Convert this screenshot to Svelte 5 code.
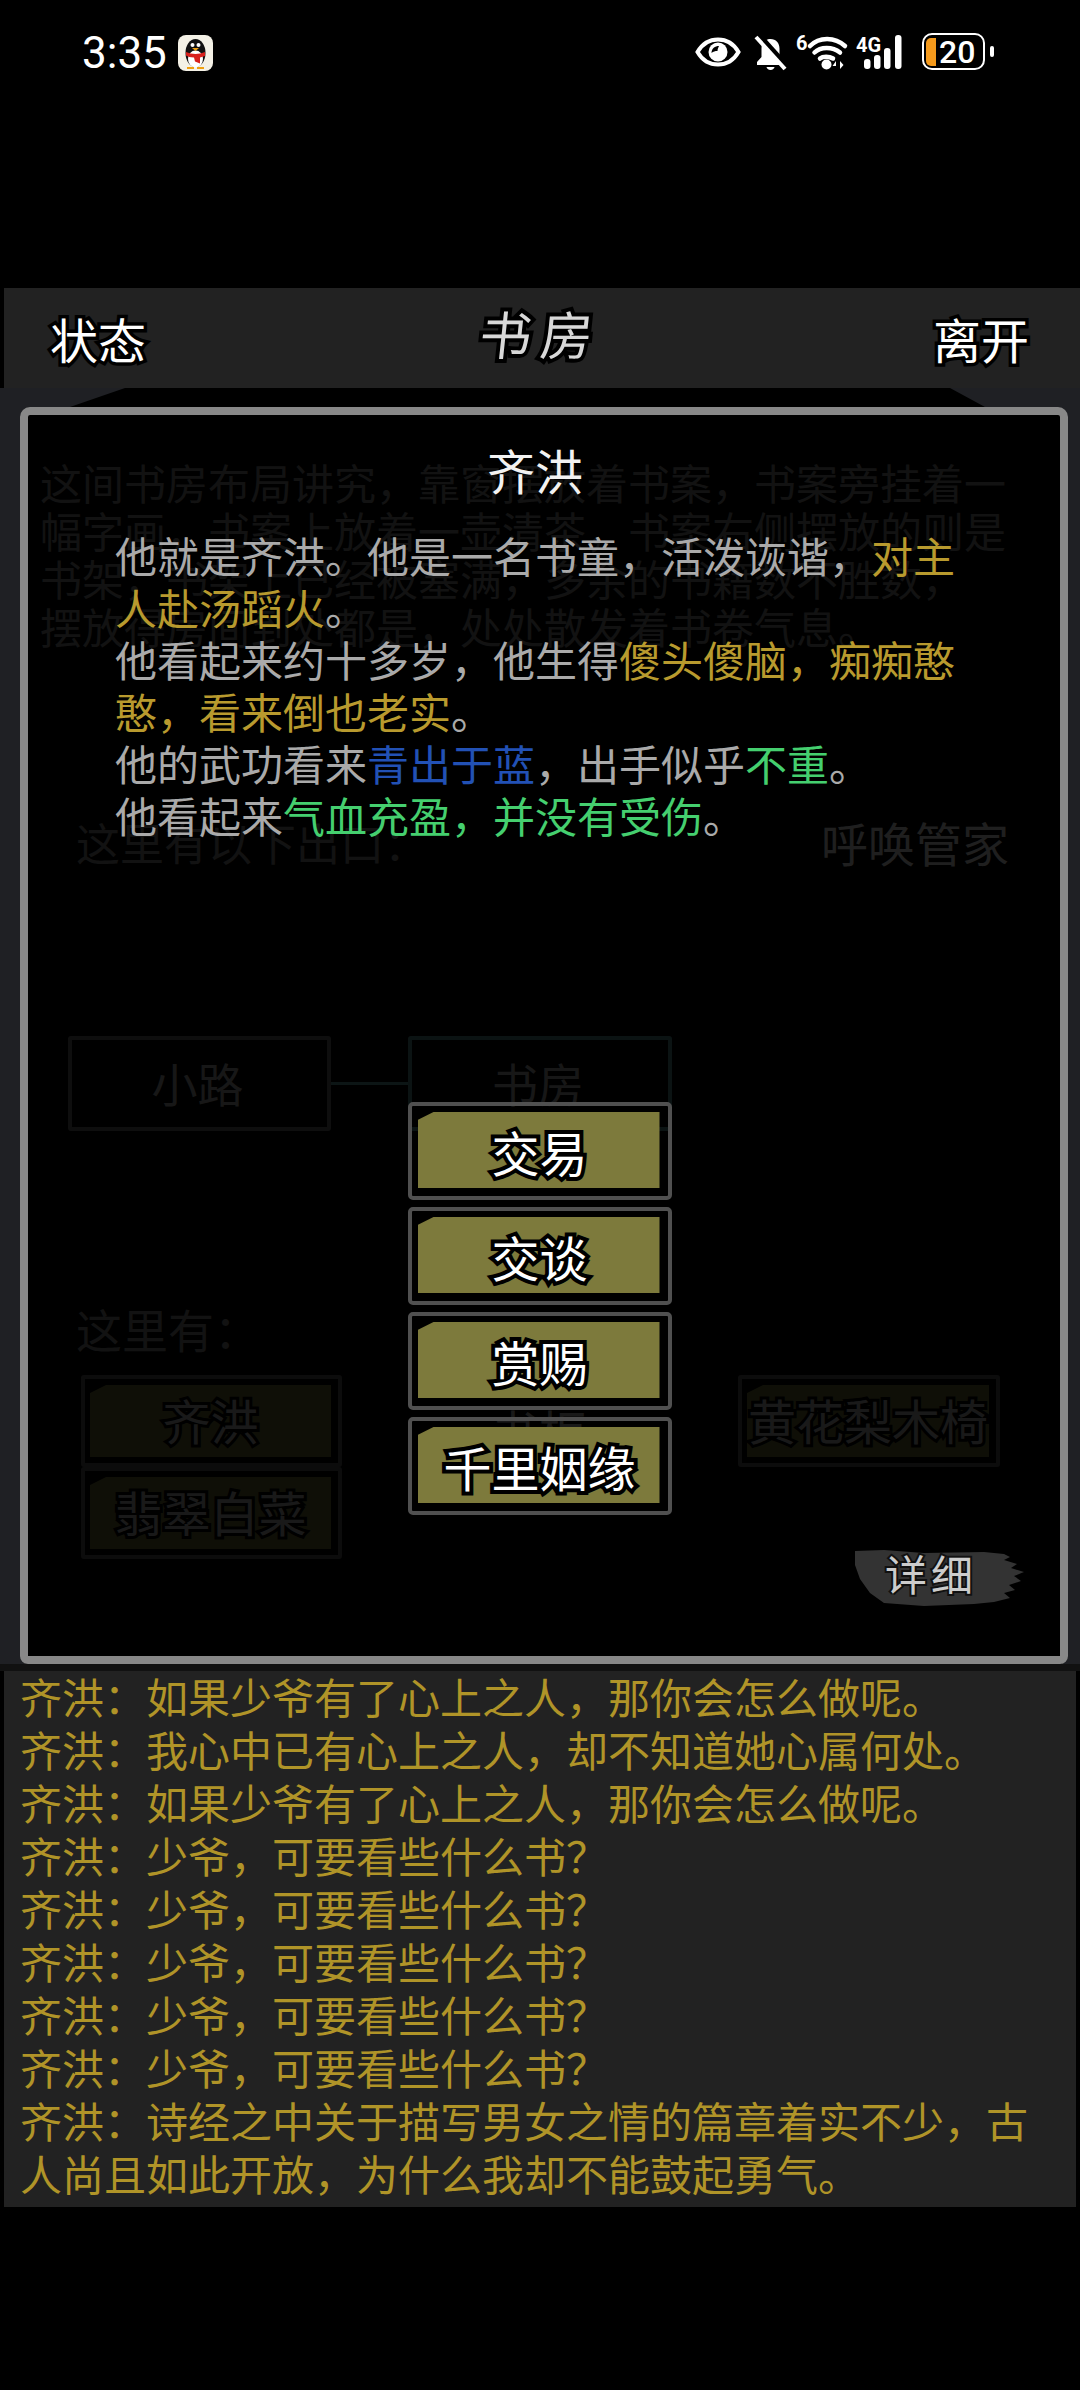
<script>
  const sceneLines = [
    '这间书房布局讲究，靠窗摆放着书案，书案旁挂着一',
    '幅字画，书案上放着一壶清茶，书案右侧摆放的则是',
    '书架，书架上已经被塞满，多余的书籍数不胜数，',
    '摆放得房间到处都是，处处散发着书卷气息。'
  ];
  const menu = ['交易', '交谈', '赏赐', '千里姻缘'];
  const log = [
    '如果少爷有了心上之人，那你会怎么做呢。',
    '我心中已有心上之人，却不知道她心属何处。',
    '如果少爷有了心上之人，那你会怎么做呢。',
    '少爷，可要看些什么书？',
    '少爷，可要看些什么书？',
    '少爷，可要看些什么书？',
    '少爷，可要看些什么书？',
    '少爷，可要看些什么书？',
    '诗经之中关于描写男女之情的篇章着实不少，古人尚且如此开放，为什么我却不能鼓起勇气。'
  ];
</script>

<div class="page">
  <header class="status">
    <span class="time">3:35</span>
    <svg class="qq" viewBox="0 0 35 36" aria-hidden="true">
      <rect width="35" height="36" rx="8" fill="#f4f1e6" />
      <ellipse cx="17.500" cy="18" rx="10" ry="14" fill="#111" />
      <ellipse cx="17.500" cy="24" rx="7.500" ry="8.500" fill="#fff" />
      <circle cx="14.500" cy="10" r="2" fill="#fff" />
      <circle cx="20.500" cy="10" r="2" fill="#fff" />
      <path d="M14 13h7l-3.500 3z" fill="#f0a010" />
      <path d="M8 17c6 2.500 13 2.500 19 0v4l-5 1.500v6l-5-2-1-4c-4 0-6-1-8-2z" fill="#d8201c" />
      <path d="M9 32h7v2H9zM19 32h7v2h-7z" fill="#f0a010" />
    </svg>
    <div class="icons">
      <svg class="eye" width="46" height="30" viewBox="0 0 46 30" aria-hidden="true">
        <path d="M2.500 15C8 5.500 15 2.500 23 2.500S38 5.500 43.500 15C38 24.500 31 27.500 23 27.500S8 24.500 2.500 15z" fill="none" stroke="#fff" stroke-width="4" />
        <circle cx="23" cy="15" r="9.500" fill="#fff" />
        <path d="M16.500 16c0-4.500 3.500-7 7.500-7-1 2-1.500 3.500-1.500 5-2.500 0-4 .5-6 2z" fill="#000" />
      </svg>
      <svg class="bell" width="33" height="34" viewBox="0 0 33 34" aria-hidden="true">
        <path d="M16.500 3c5.500 0 9 4 9 9.500v8.500l4.500 5v3H3v-3l4.500-5v-8.500c0-5.500 3.500-9.500 9-9.500z" fill="#fff" />
        <path d="M12.500 31h8c0 1.500-2 3-4 3s-4-1.500-4-3z" fill="#fff" />
        <path d="M6 0l26 29" stroke="#000" stroke-width="5" />
        <path d="M2 1l29 32" stroke="#fff" stroke-width="4" />
      </svg>
      <svg class="wifi" width="50" height="35" viewBox="0 0 50 35" aria-hidden="true">
        <text x="0" y="15" class="mini">6</text>
        <path d="M14 11C23 1.500 39 1.500 49 11M18.500 17.500c6-6 18-6 25.500 0M24 23.500c3-2.500 9-2.500 13 0" fill="none" stroke="#fff" stroke-width="4.500" stroke-linecap="round" />
        <circle cx="30.500" cy="29.500" r="5" fill="#fff" />
        <path d="M40 34v-8l-3.500 5H40zM44 26v8l3.500-4z" fill="#fff" />
      </svg>
      <svg class="signal" width="51" height="34" viewBox="0 0 51 34" aria-hidden="true">
        <text x="-1" y="17" class="mini">4G</text>
        <g fill="#fff">
          <rect x="7" y="24" width="6.500" height="10" rx="3" />
          <rect x="17" y="20" width="6.500" height="14" rx="3" />
          <rect x="27" y="13" width="6.500" height="21" rx="3" />
          <rect x="38" y="0" width="6.500" height="34" rx="3" />
        </g>
      </svg>
      <div class="battery">
        <div class="cell"><span class="charge"></span><span class="level">20</span></div>
        <span class="tip"></span>
      </div>
    </div>
  </header>

  <div class="topbar">
    <span class="outlined side">状态</span>
    <span class="outlined room">书房</span>
    <span class="outlined side">离开</span>
  </div>

  <main class="stage">
    <svg class="ink" viewBox="0 0 1080 1283" aria-hidden="true">
      <path d="M125 0L950 0L985 19L1062 27V1276H25V27L70 19z" fill="#000" />
      <rect y="1276" width="1080" height="7" fill="#111" />
    </svg>

    <section class="scene">
      <div class="desc">
        {#each sceneLines as line}
          <p>{line}</p>
        {/each}
      </div>
      <div class="exits">
        <span>这里有以下出口：</span>
        <span class="call">呼唤管家</span>
      </div>
      <div class="map">
        <div class="node">小路</div>
        <i class="link"></i>
        <div class="node current">书房</div>
      </div>
      <div class="here">这里有：</div>
      <div class="things">
        <div class="col">
          <div class="thing"><span>齐洪</span></div>
          <div class="thing"><span>翡翠白菜</span></div>
        </div>
        <div class="col">
          <div class="thing plain"><span>书柜</span></div>
        </div>
        <div class="col">
          <div class="thing"><span>黄花梨木椅</span></div>
        </div>
      </div>
    </section>

    <div class="modal">
      <h2>齐洪</h2>
      <p class="bio">
        他就是齐洪。他是一名书童，活泼诙谐，<b class="gold">对主人赴汤蹈火</b>。<br />
        他看起来约十多岁，他生得<b class="gold">傻头傻脑，痴痴憨憨，看来倒也老实</b>。<br />
        他的武功看来<b class="blue">青出于蓝</b>，出手似乎<b class="green">不重</b>。<br />
        他看起来<b class="green">气血充盈，并没有受伤</b>。
      </p>
      <nav class="menu">
        {#each menu as label}
          <div class="action"><span class="fill"></span><span class="outlined label">{label}</span></div>
        {/each}
      </nav>
      <div class="detail">
        <svg viewBox="0 0 170 60" aria-hidden="true">
          <path d="M1 4L30 3 70 6 130 5 150 7 156 10 150 13 163 17 157 21 170 25 160 29 167 34 155 38 161 43 150 46 156 51 140 55 120 57 70 59 30 56 16 46 6 32 1 18z" fill="#333" />
        </svg>
        <span class="detail-label">详细</span>
      </div>
    </div>
  </main>

  <section class="log">
    {#each log as line}
      <p>齐洪：{line}</p>
    {/each}
  </section>
</div>

<style>
  :global(body) {
    margin: 0;
    background: #000;
  }

  .page {
    width: 1080px;
    height: 2390px;
    background: #000;
    font-family: "Noto Sans CJK SC", "Noto Sans", sans-serif;
    overflow: hidden;
  }

  /* status bar */
  .status {
    height: 288px;
    box-sizing: border-box;
    padding: 33px 86px 0 82px;
    display: flex;
    align-items: flex-start;
  }

  .time {
    font-family: Roboto, sans-serif;
    font-size: 44px;
    line-height: 40px;
    color: #fff;
    width: 96px;
  }

  .qq {
    width: 35px;
    height: 36px;
    margin-top: 2px;
  }

  .icons {
    margin-left: auto;
    display: flex;
    align-items: flex-start;
  }

  .icons svg {
    display: block;
    overflow: visible;
  }

  .eye {
    margin-top: 4px;
  }

  .bell {
    margin: 3px 0 0 13px;
  }

  .wifi {
    margin: 2px 0 0 9px;
  }

  .signal {
    margin: 2px 0 0 11px;
  }

  .mini {
    font-family: Roboto, sans-serif;
    font-size: 20px;
    font-weight: 700;
    fill: #fff;
  }

  .battery {
    margin-left: 14px;
    display: flex;
    align-items: center;
  }

  .cell {
    width: 63px;
    height: 37px;
    box-sizing: border-box;
    border: 2.500px solid #fff;
    border-radius: 10px;
    display: flex;
    align-items: center;
    padding-left: 2px;
    gap: 3px;
    overflow: hidden;
  }

  .charge {
    width: 10px;
    height: 28px;
    background: #f59a1c;
    border-radius: 5px 0 0 5px;
  }

  .level {
    font-family: Roboto, sans-serif;
    font-size: 32px;
    line-height: 32px;
    font-weight: 500;
    color: #fff;
  }

  .tip {
    width: 4px;
    height: 11px;
    margin-left: 5px;
    border-radius: 2px;
    background: #fff;
  }

  /* top bar */
  .topbar {
    margin-left: 4px;
    height: 100px;
    box-sizing: border-box;
    padding: 0 51px 0 46px;
    background: #222;
    display: flex;
    align-items: center;
    justify-content: space-between;
  }

  .outlined {
    color: #fff;
    -webkit-text-stroke: 7px #000;
    paint-order: stroke fill;
  }

  .side {
    font-size: 48px;
    line-height: 60px;
  }

  .room {
    font-size: 52px;
    line-height: 60px;
    letter-spacing: 9px;
    color: #d8d8d8;
    margin: -10px 0 0 4px;
    transform: skewX(-6deg);
    -webkit-text-stroke-width: 8px;
  }

  /* scene under the modal */
  .stage {
    position: relative;
    height: 1283px;
    background: #1f2024;
    overflow: hidden;
  }

  .ink {
    position: absolute;
    inset: 0;
    width: 100%;
    height: 100%;
  }

  .scene {
    position: relative;
    padding: 70px 36px 0 40px;
    color: #909090;
  }

  .desc {
    font-size: 42px;
    line-height: 48px;
    height: 192px;
  }

  .desc p {
    margin: 0;
    white-space: nowrap;
  }

  .exits {
    margin: 164px 35px 0 36px;
    display: flex;
    justify-content: space-between;
    align-items: center;
    font-size: 44px;
    line-height: 56px;
  }

  .call {
    font-size: 47px;
    color: #fff;
  }

  .map {
    margin: 166px 0 0 28px;
    display: flex;
    align-items: center;
  }

  .node {
    width: 263px;
    height: 95px;
    box-sizing: border-box;
    border: 4px solid #777;
    border-radius: 3px;
    font-size: 46px;
    display: flex;
    align-items: center;
    justify-content: center;
    color: #bbb;
    padding: 0 4px 3px 0;
  }

  .current {
    width: 264px;
    border-color: #5f9f9f;
  }

  .link {
    width: 77px;
    height: 3px;
    background: #6aa;
  }

  .here {
    margin: 169px 0 0 36px;
    font-size: 46px;
    line-height: 56px;
  }

  .things {
    margin: 19px 44px 0 41px;
    display: grid;
    grid-template-columns: 261px 264px 262px;
    justify-content: space-between;
  }

  .thing {
    height: 92px;
    box-sizing: border-box;
    border: 4px solid #666;
    border-radius: 3px;
    padding: 6px 7px 6px 5px;
  }

  .thing span {
    display: flex;
    height: 100%;
    box-sizing: border-box;
    padding-bottom: 4px;
    align-items: center;
    justify-content: center;
    background: #7d7a3c;
    font-size: 48px;
    color: #ccc;
    -webkit-text-stroke: 6px #000;
    paint-order: stroke fill;
    white-space: nowrap;
    clip-path: polygon(16px 0, 100% 0, 100% 100%, 0 100%, 0 8px);
  }

  .thing.plain {
    border-color: transparent;
  }

  .thing.plain span {
    background: none;
    padding-top: 22px;
  }

  /* character dialog */
  .modal {
    position: absolute;
    top: 19px;
    left: 20px;
    width: 1048px;
    height: 1257px;
    box-sizing: border-box;
    border: 8.500px solid #888;
    border-radius: 10px 10px 8px 8px;
    background: rgba(0, 0, 0, 0.88);
    display: flex;
    flex-direction: column;
  }

  h2 {
    margin: 28px 18px 0 0;
    font-size: 48px;
    line-height: 52px;
    font-weight: 400;
    text-align: center;
    color: #f2f2f2;
  }

  .bio {
    margin: 34px 0 0 87px;
    width: 860px;
    font-size: 42px;
    line-height: 52px;
    color: #aaa;
    height: 312px;
  }

  .bio b {
    font-weight: 400;
  }

  .gold {
    color: #b89a2e;
  }

  .blue {
    color: #2251b5;
  }

  .green {
    color: #45cf6f;
  }

  .menu {
    margin: 261px 9px 0 0;
    display: flex;
    flex-direction: column;
    align-items: center;
    gap: 7px;
  }

  .action {
    position: relative;
    width: 264px;
    height: 98px;
    box-sizing: border-box;
    border: 4.500px solid #505050;
    border-radius: 5px;
    padding: 6px 8px 8px 6px;
    display: flex;
  }

  .fill {
    flex: 1;
    background: #7d7a3c;
    clip-path: polygon(16px 0, 100% 0, 100% 100%, 0 100%, 0 8px);
  }

  .label {
    position: absolute;
    inset: 0;
    display: flex;
    align-items: center;
    justify-content: center;
    font-size: 48px;
    -webkit-text-stroke-width: 8px;
  }

  .detail {
    position: relative;
    align-self: flex-end;
    width: 170px;
    height: 60px;
    margin: 32px 36px 0 0;
  }

  .detail svg {
    display: block;
    width: 100%;
    height: 100%;
  }

  .detail-label {
    position: absolute;
    left: 31px;
    top: -4px;
    font-size: 42px;
    line-height: 60px;
    letter-spacing: 4px;
    color: #ccc;
    -webkit-text-stroke: 4px #111;
    paint-order: stroke fill;
    white-space: nowrap;
  }

  /* chat log */
  .log {
    margin: 0 4px;
    height: 536px;
    box-sizing: border-box;
    padding: 0 16px;
    background: #222;
    font-size: 42px;
    line-height: 53px;
    color: #b09428;
  }

  .log p {
    margin: 0;
    position: relative;
    top: -2px;
  }
</style>
